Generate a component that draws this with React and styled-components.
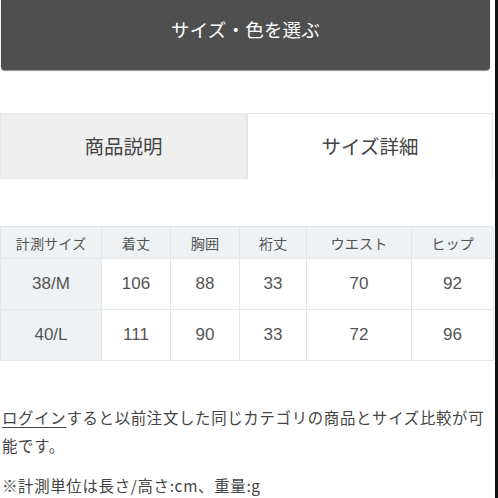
import React from 'react';
import styled, { createGlobalStyle } from 'styled-components';

const GlobalStyle = createGlobalStyle`
  html, body {
    margin: 0;
    padding: 0;
    background: #fff;
  }
  body {
    font-family: "Noto Sans CJK JP", "Noto Sans", sans-serif;
    color: #444;
  }
`;

const Page = styled.div`
  display: flex;
  width: 498px;
  height: 498px;
  overflow: hidden;
`;

const Main = styled.div`
  flex: 1;
  min-width: 0;
`;

const EdgeBar = styled.div`
  flex-shrink: 0;
  width: 3px;
  background: #111;
`;

const SelectButton = styled.button`
  display: flex;
  align-items: center;
  justify-content: center;
  width: 489px;
  height: 70px;
  margin: 0 0 0 1px;
  padding: 0 0 12px 0;
  border: none;
  border-radius: 0 0 4px 4px;
  background: #4f4f4f;
  box-shadow: 0 1px 1px rgba(0, 0, 0, 0.45);
  color: #fff;
  font-family: inherit;
  font-size: 18.5px;
  letter-spacing: 0.2px;
`;

const Tabs = styled.div`
  display: grid;
  grid-template-columns: 247px 246px;
  height: 66px;
  margin-top: 43px;
`;

const Tab = styled.div`
  display: flex;
  align-items: center;
  justify-content: center;
  font-size: 19.5px;
  color: #444;
  background: ${({ active }) => (active ? '#fff' : '#efefef')};
  border: 1px solid #e6e6e6;
  border-bottom: ${({ active }) => (active ? 'none' : '1px solid #e6e6e6')};
  box-sizing: border-box;
  padding-bottom: 2px;
`;

const Table = styled.table`
  width: 493px;
  margin-top: 47px;
  border-collapse: collapse;
  table-layout: fixed;
`;

const HeadCell = styled.th`
  height: 31px;
  padding: 0;
  font-weight: normal;
  font-size: 14.2px;
  color: #555;
  background: #eef2f4;
  border: 1px solid #e2e7ea;
  text-align: center;
`;

const Cell = styled.td`
  height: 50px;
  padding: 0;
  font-family: "Liberation Sans", "Noto Sans CJK JP", sans-serif;
  font-size: 17px;
  color: #555;
  background: ${({ label }) => (label ? '#eef2f4' : '#fff')};
  border: 1px solid #e2e7ea;
  text-align: center;
`;

const Note = styled.p`
  max-width: 486px;
  margin: ${({ top }) => top}px 0 0 2px;
  font-size: 15.4px;
  letter-spacing: 0.7px;
  line-height: 28px;
  color: #444;
`;

const LoginLink = styled.span`
  text-decoration: underline;
  text-underline-offset: 3px;
`;

const columns = [
  { label: '計測サイズ', width: 101 },
  { label: '着丈', width: 69 },
  { label: '胸囲', width: 69 },
  { label: '裄丈', width: 67 },
  { label: 'ウエスト', width: 105 },
  { label: 'ヒップ', width: 82 },
];

const rows = [
  ['38/M', '106', '88', '33', '70', '92'],
  ['40/L', '111', '90', '33', '72', '96'],
];

export default function App() {
  return (
    <>
      <GlobalStyle />
      <Page>
        <Main>
          <SelectButton>サイズ・色を選ぶ</SelectButton>
          <Tabs>
            <Tab>商品説明</Tab>
            <Tab active>サイズ詳細</Tab>
          </Tabs>
          <Table>
            <colgroup>
              {columns.map(c => (
                <col key={c.label} style={{ width: c.width }} />
              ))}
            </colgroup>
            <thead>
              <tr>
                {columns.map(c => (
                  <HeadCell key={c.label}>{c.label}</HeadCell>
                ))}
              </tr>
            </thead>
            <tbody>
              {rows.map(r => (
                <tr key={r[0]}>
                  {r.map((v, i) => (
                    <Cell key={i} label={i === 0}>{v}</Cell>
                  ))}
                </tr>
              ))}
            </tbody>
          </Table>
          <Note top={42}>
            <LoginLink>ログイン</LoginLink>すると以前注文した同じカテゴリの商品とサイズ比較が可能です。
          </Note>
          <Note top={12}>※計測単位は長さ/高さ:cm、重量:g</Note>
        </Main>
        <EdgeBar />
      </Page>
    </>
  );
}
